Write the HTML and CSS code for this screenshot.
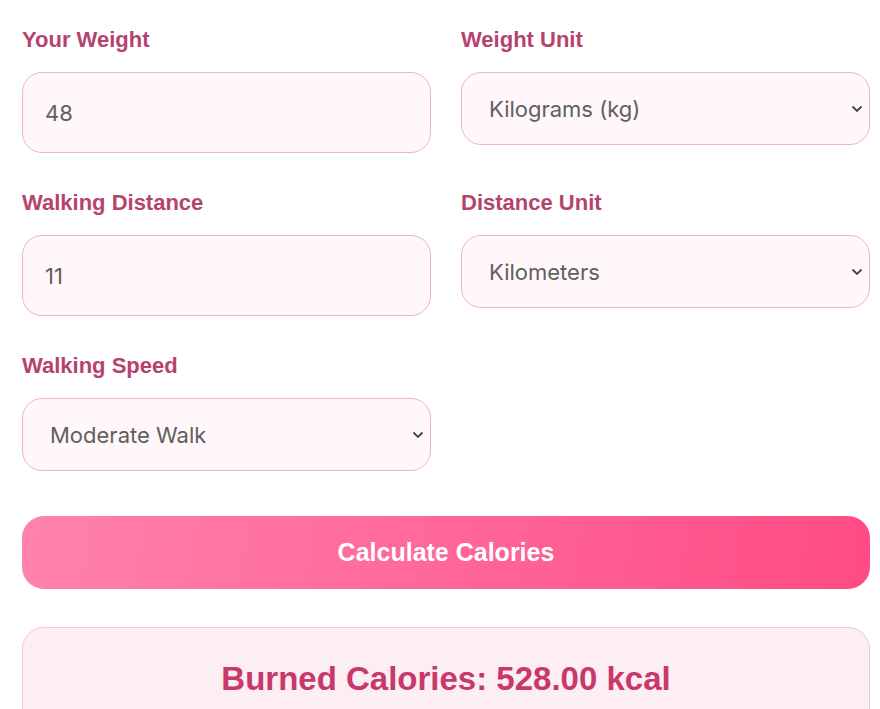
FILE: index.html
```html
<!DOCTYPE html>
<html>
<head>
<meta charset="utf-8">
<link rel="stylesheet" href="styles.css">
</head>
<body>
<div class="calc">
  <div class="grid">
    <div class="field">
      <label class="label">Your Weight</label>
      <input class="input" type="text" value="48">
    </div>
    <div class="field">
      <label class="label">Weight Unit</label>
      <select class="select"><option>Kilograms (kg)</option></select>
    </div>
    <div class="field">
      <label class="label">Walking Distance</label>
      <input class="input" type="text" value="11">
    </div>
    <div class="field">
      <label class="label">Distance Unit</label>
      <select class="select"><option>Kilometers</option></select>
    </div>
    <div class="field">
      <label class="label">Walking Speed</label>
      <select class="select"><option>Moderate Walk</option></select>
    </div>
  </div>
  <button class="btn">Calculate Calories</button>
  <div class="result">Burned Calories: 528.00 kcal</div>
</div>
</body>
</html>
```
FILE: styles.css
```css
* { box-sizing: border-box; }
html, body { margin: 0; background: #ffffff; overflow: hidden; }
body { font-family: "Liberation Sans", Arial, sans-serif; }
.calc { padding: 28px 10px 0 22px; }
.grid {
  display: grid;
  grid-template-columns: 1fr 1fr;
  column-gap: 30px;
  row-gap: 38px;
  align-items: start;
}
.field { display: flex; flex-direction: column; }
.label {
  font-weight: bold;
  font-size: 22px;
  line-height: 24px;
  color: #b5436e;
  margin-bottom: 20px;
}
.input, .select {
  font-family: Inter, "Noto Sans", sans-serif;
  font-size: 22px;
  color: #606060;
  background: #fff7f9;
  border: 1px solid #ebb5ca;
  border-radius: 20px;
  outline: none;
}
.input { height: 81px; padding: 0 22px; }
.select {
  height: 73px;
  padding: 0 40px 0 27px;
  appearance: none;
  -webkit-appearance: none;
  background-image: url("data:image/svg+xml,%3Csvg xmlns='http://www.w3.org/2000/svg' width='12' height='8' viewBox='0 0 12 8'%3E%3Cpath d='M1.5 1.5 L6 6 L10.5 1.5' fill='none' stroke='%23444' stroke-width='1.8'/%3E%3C/svg%3E");
  background-repeat: no-repeat;
  background-position: right 6px center;
}
.btn {
  display: block;
  width: 100%;
  height: 73px;
  margin-top: 45px;
  border: none;
  border-radius: 22px;
  background: linear-gradient(100deg, #ff82ae 0%, #ff4b84 100%);
  color: #ffffff;
  font-family: "Liberation Sans", Arial, sans-serif;
  font-weight: bold;
  font-size: 25px;
}
.result {
  margin-top: 38px;
  height: 120px;
  border: 1px solid #f6c3d4;
  border-radius: 22px;
  background: #fdeef3;
  color: #c8386b;
  font-weight: bold;
  font-size: 33px;
  text-align: center;
  padding-top: 32px;
}
```
